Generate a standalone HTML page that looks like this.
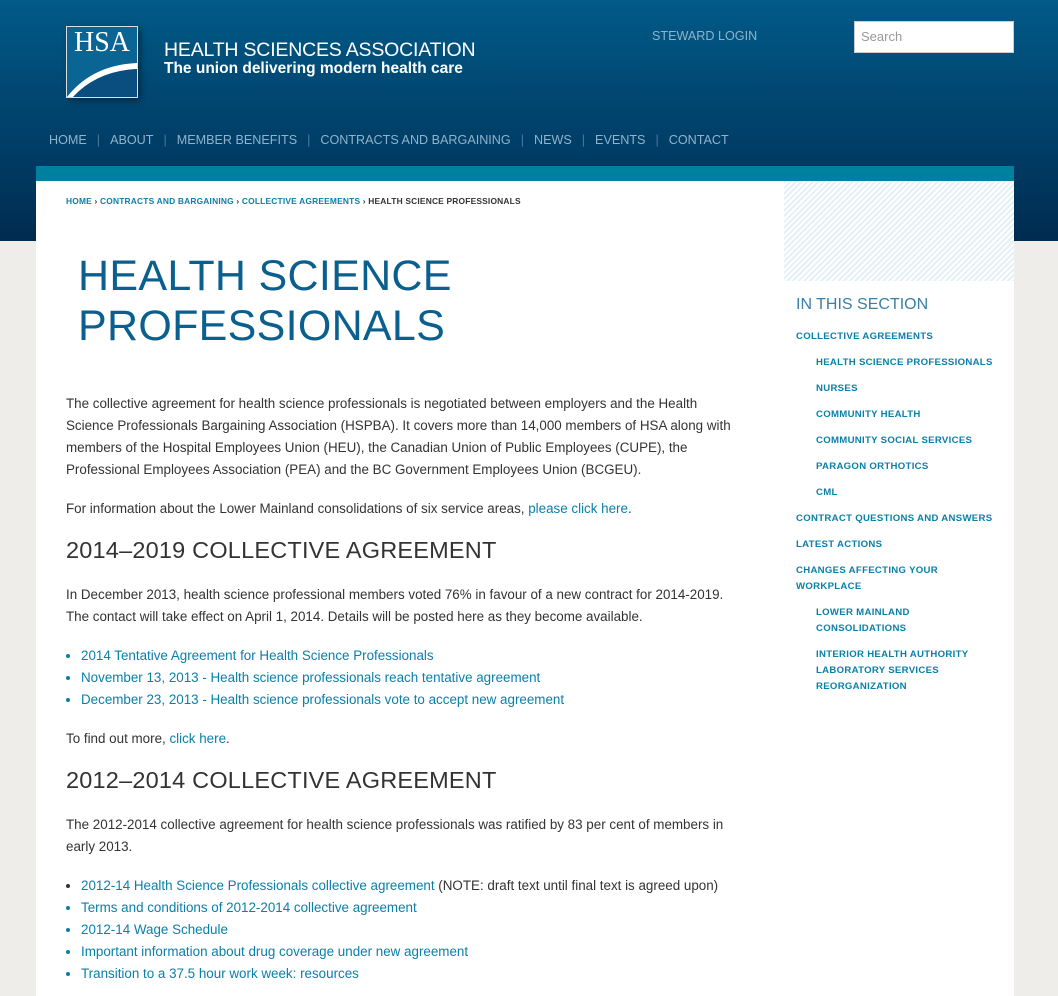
<!DOCTYPE html><html><head><style>
body{margin:0;width:1058px;height:991px;overflow:hidden;background:#eeedea;font-family:"Liberation Sans",sans-serif;position:relative}
.hdr{position:absolute;left:0;top:0;width:1058px;height:241px;background:linear-gradient(#015a88,#002b50)}
.a{color:#0a7fa8;text-decoration:none}
.box{position:absolute;left:36px;top:166px;width:978px;height:830px;background:#fff}
.bar{position:absolute;left:0;top:0;width:978px;height:15px;background:#00809f}
.stripes{position:absolute;left:748px;top:15px;width:230px;height:100px;background:repeating-linear-gradient(135deg,#e3f0f5 0 2px,#fff 2px 4px)}
.nav{position:absolute;top:133px;left:49px;font-size:12.6px;color:#8fb3cc;white-space:nowrap}
.nav span.s{color:#4a7a9e;margin:0 10px}
p{margin:0}
.main{position:absolute;left:66px;width:665px;font-size:13.4px;line-height:22px;color:#333}
h2{font-weight:normal;font-size:23.5px;color:#333;margin:0;letter-spacing:.2px}
ul{margin:0;padding-left:15px}
.sb{position:absolute;left:796px;font-size:9.6px;font-weight:bold;color:#0a7fa8;letter-spacing:.3px;line-height:16px}
.sb.i{left:816px;width:190px}
</style></head><body>
<div class="hdr">
<div style="position:absolute;left:66px;top:26px;width:70px;height:70px;border:1px solid #ddd;background:#0a6595;overflow:hidden;box-shadow:3px 3px 6px rgba(0,0,0,.4)">
<div style="position:absolute;left:0;top:0;width:70px;text-align:center;color:#fff;font-family:'Liberation Serif',serif;font-size:28px;line-height:32px">HSA</div>
<svg width="70" height="70" style="position:absolute;left:0;top:0"><path d="M0 70 Q25 38 70 36 L70 42 Q30 44 6 70Z" fill="#fff"/><path d="M6 70 Q30 44 70 42 L70 70Z" fill="#0a4e80"/></svg></div>
<div style="position:absolute;left:164px;top:39px;color:#fff;font-size:19.5px;letter-spacing:-.2px">HEALTH SCIENCES ASSOCIATION</div>
<div style="position:absolute;left:164px;top:60px;color:#fff;font-size:15.5px;font-weight:bold;letter-spacing:0">The union delivering modern health care</div>
<div style="position:absolute;left:652px;top:29px;color:#8fb3cc;font-size:12.6px">STEWARD LOGIN</div>
<div style="position:absolute;left:854px;top:21px;background:#fff;border:1px solid #ccc;color:#999;font-size:13px;line-height:30px;padding-left:6px;box-sizing:border-box;width:160px;height:32px">Search</div>
<div class="nav">HOME<span class="s">|</span>ABOUT<span class="s">|</span>MEMBER BENEFITS<span class="s">|</span>CONTRACTS AND BARGAINING<span class="s">|</span>NEWS<span class="s">|</span>EVENTS<span class="s">|</span>CONTACT</div>
</div>
<div class="box"><div class="bar"></div><div class="stripes"></div></div>
<div style="position:absolute;left:66px;top:196px;font-size:8.4px;font-weight:bold;color:#333;letter-spacing:.2px"><span class="a">HOME</span> › <span class="a">CONTRACTS AND BARGAINING</span> › <span class="a">COLLECTIVE AGREEMENTS</span> › HEALTH SCIENCE PROFESSIONALS</div>
<div style="position:absolute;left:78px;top:251px;font-size:43px;line-height:50px;color:#0a5f8e;letter-spacing:.3px">HEALTH SCIENCE<br>PROFESSIONALS</div>
<div class="main" style="top:393px">The collective agreement for health science professionals is negotiated between employers and the Health Science Professionals Bargaining Association (HSPBA). It covers more than 14,000 members of HSA along with members of the Hospital Employees Union (HEU), the Canadian Union of Public Employees (CUPE), the Professional Employees Association (PEA) and the BC Government Employees Union (BCGEU).</div>
<div class="main" style="top:498px">For information about the Lower Mainland consolidations of six service areas, <span class="a">please click here</span>.</div>
<div class="main" style="top:539px"><h2>2014–2019 COLLECTIVE AGREEMENT</h2></div>
<div class="main" style="top:584px">In December 2013, health science professional members voted 76% in favour of a new contract for 2014-2019. The contact will take effect on April 1, 2014. Details will be posted here as they become available.</div>
<div class="main" style="top:645px"><ul><li class="a">2014 Tentative Agreement for Health Science Professionals</li><li class="a">November 13, 2013 - Health science professionals reach tentative agreement</li><li class="a">December 23, 2013 - Health science professionals vote to accept new agreement</li></ul></div>
<div class="main" style="top:728px">To find out more, <span class="a">click here</span>.</div>
<div class="main" style="top:769px"><h2>2012–2014 COLLECTIVE AGREEMENT</h2></div>
<div class="main" style="top:814px">The 2012-2014 collective agreement for health science professionals was ratified by 83 per cent of members in early 2013.</div>
<div class="main" style="top:875px;width:700px"><ul><li><span class="a">2012-14 Health Science Professionals collective agreement</span> (NOTE: draft text until final text is agreed upon)</li><li class="a">Terms and conditions of 2012-2014 collective agreement</li><li class="a">2012-14 Wage Schedule</li><li class="a">Important information about drug coverage under new agreement</li><li class="a">Transition to a 37.5 hour work week: resources</li></ul></div>
<div style="position:absolute;left:796px;top:296px;font-size:16px;color:#3a7fa5">IN THIS SECTION</div>
<div class="sb" style="top:329px">COLLECTIVE AGREEMENTS</div>
<div class="sb i" style="top:355px">HEALTH SCIENCE PROFESSIONALS</div>
<div class="sb i" style="top:381px">NURSES</div>
<div class="sb i" style="top:407px">COMMUNITY HEALTH</div>
<div class="sb i" style="top:433px">COMMUNITY SOCIAL SERVICES</div>
<div class="sb i" style="top:459px">PARAGON ORTHOTICS</div>
<div class="sb i" style="top:485px">CML</div>
<div class="sb" style="top:511px">CONTRACT QUESTIONS AND ANSWERS</div>
<div class="sb" style="top:537px">LATEST ACTIONS</div>
<div class="sb" style="top:563px;width:170px">CHANGES AFFECTING YOUR WORKPLACE</div>
<div class="sb i" style="top:605px;width:120px">LOWER MAINLAND CONSOLIDATIONS</div>
<div class="sb i" style="top:647px;width:170px">INTERIOR HEALTH AUTHORITY LABORATORY SERVICES REORGANIZATION</div>
</body></html>
